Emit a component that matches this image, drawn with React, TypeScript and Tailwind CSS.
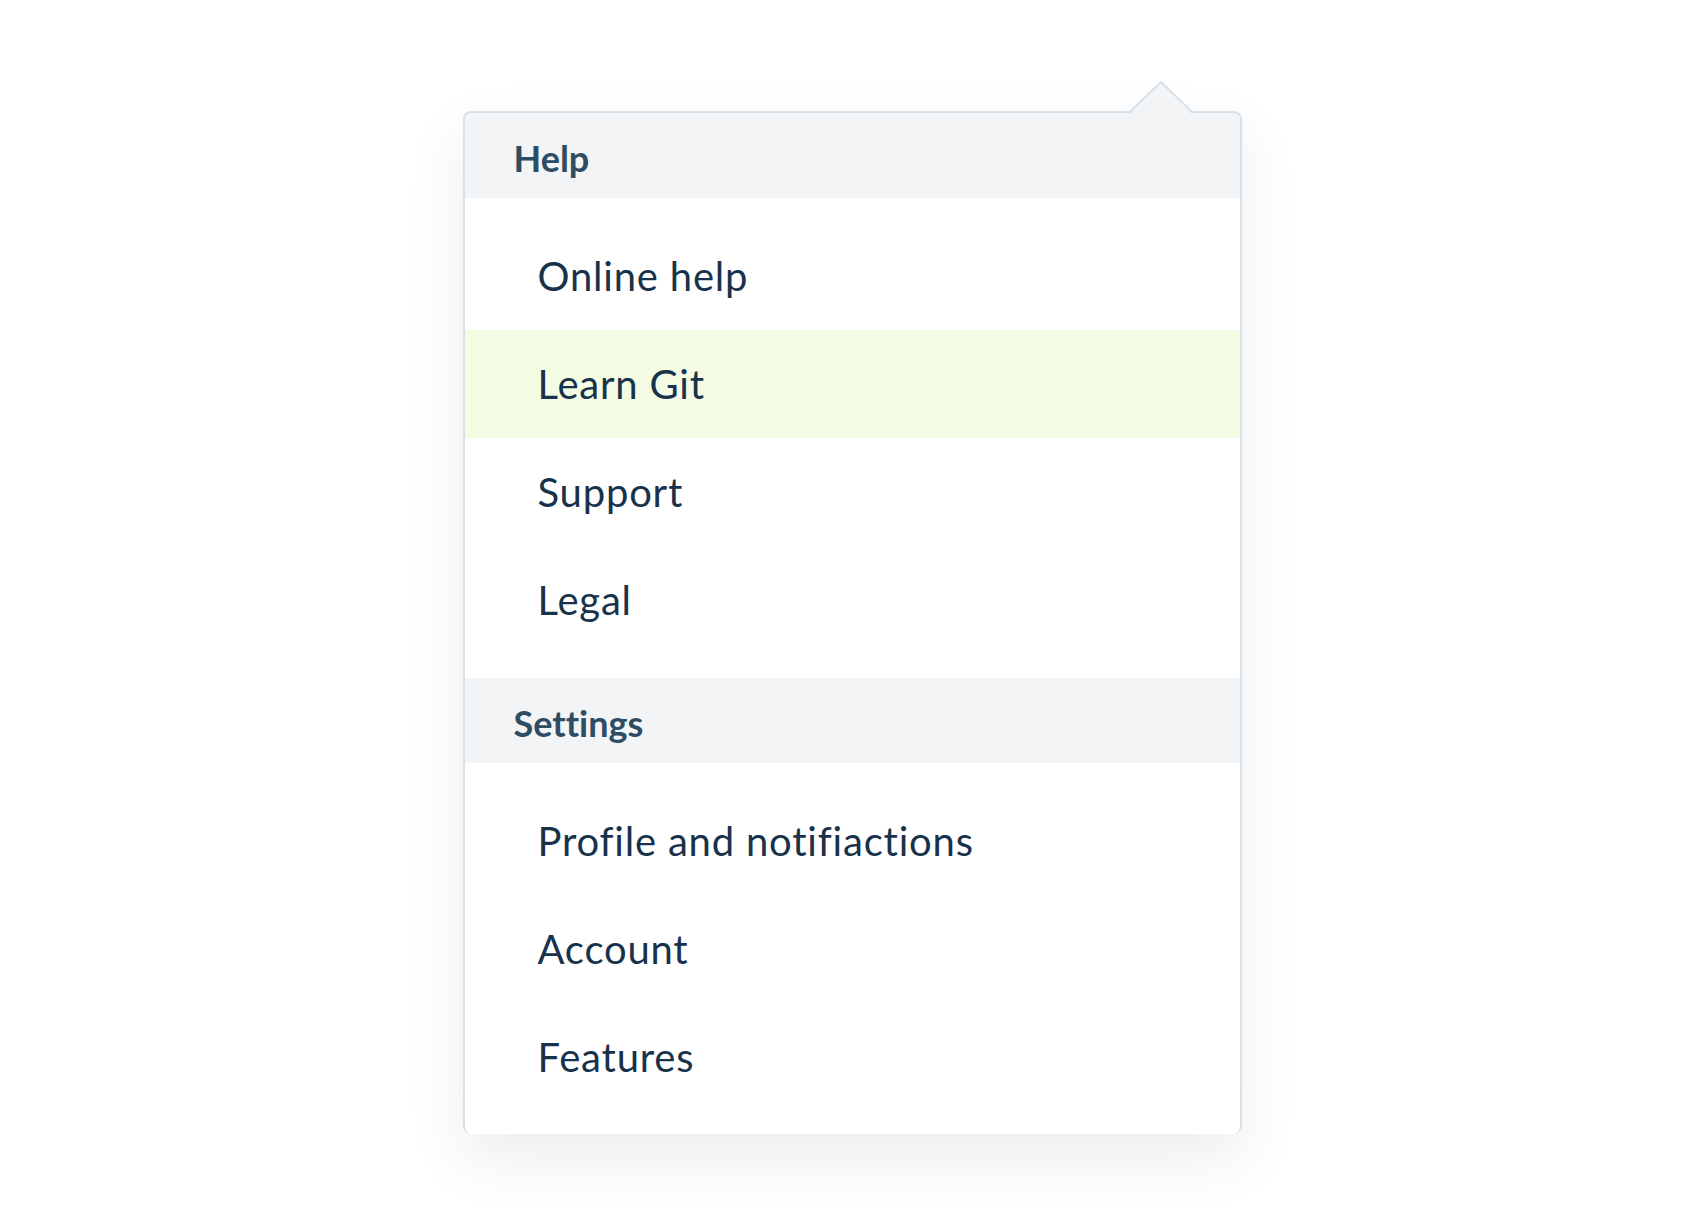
import React from "react";

type Section = {
    title: string;
    items: string[];
};

const sections: Section[] = [
    { title: "Help", items: ["Online help", "Learn Git", "Support", "Legal"] },
    { title: "Settings", items: ["Profile and notifiactions", "Account", "Features"] },
];

const active = "Learn Git";

const MenuItem = ({ label }: { label: string }) => (
    <div
        className={`flex items-center h-[108px] pl-[73px] text-[40px] tracking-[0.8px] text-[#18324b] ${
            label === active ? "bg-[#f3fbe3]" : "bg-white"
        }`}
    >
        {label}
    </div>
);

const App: React.FC = () => {
    return (
        <div className="min-h-screen w-full bg-white flex justify-center pt-[111px] font-['Lato',sans-serif]">
            <div className="relative w-[779px] h-[1023px] rounded-lg border-x-2 border-t-2 border-[#d6e1e9] bg-white shadow-[0_24px_60px_rgba(40,60,90,0.09)]">
                {/* pointer */}
                <svg
                    className="absolute left-[665px] top-[-32px]"
                    width="62"
                    height="34"
                    viewBox="0 0 62 34"
                >
                    <polygon points="1,32 31,2 61,32 61,34 1,34" fill="#f2f4f6" />
                    <polyline points="0,31 31,1 62,31" fill="none" stroke="#d6e1e9" strokeWidth="2" />
                </svg>

                <div className="overflow-hidden rounded-t-md">
                    {sections.map((section) => (
                        <div key={section.title}>
                            <div className="flex items-center h-[85px] pl-[49px] pt-[5px] bg-[#f2f4f6] text-[36px] font-bold text-[#2e4d64] [font-variant-ligatures:none]">
                                {section.title}
                            </div>
                            <div className="py-6">
                                {section.items.map((item) => (
                                    <MenuItem key={item} label={item} />
                                ))}
                            </div>
                        </div>
                    ))}
                </div>
            </div>
        </div>
    );
};

export default App;
